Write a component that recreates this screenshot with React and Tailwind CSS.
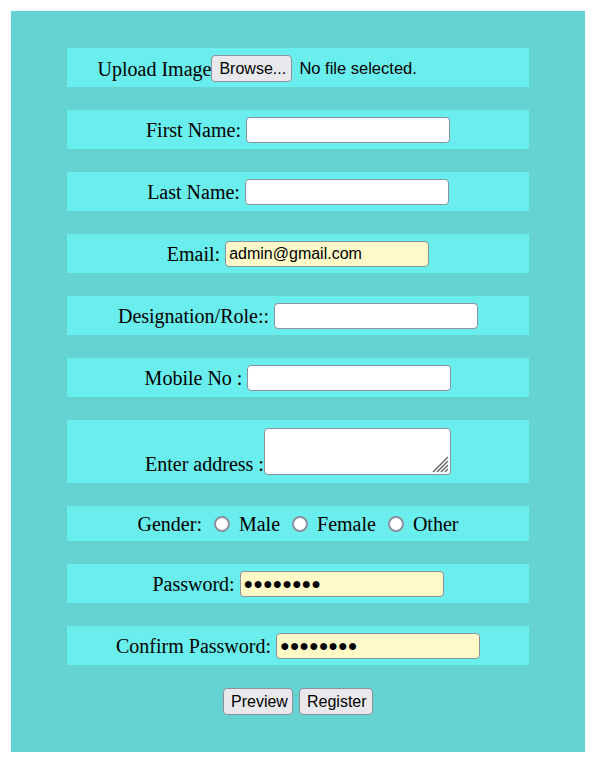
import React from "react";

const serif = { fontFamily: '"Liberation Serif", "Times New Roman", serif' };

function Row({ children, h = "h-[39px]", align = "items-center" }) {
  return (
    <div className={`w-[462px] mx-auto bg-[#6aeded] ${h} flex ${align} justify-center text-[20px] text-black`}>
      {children}
    </div>
  );
}

const inputCls =
  "w-[204px] h-[26px] border border-[#8f8f9d] rounded-[4px] px-[3px] text-[16px] text-black outline-none font-['Liberation_Sans',Arial,sans-serif]";

const btnCls =
  "h-[27px] border border-[#8f8f9d] rounded-[4px] bg-[#e9e9ed] text-[16px] text-black px-[7px] font-['Liberation_Sans',Arial,sans-serif] leading-none";

function TextField({ label, value = "", bg = "bg-white" }) {
  return (
    <div className="flex items-center">
      <span style={serif}>{label}</span>
      <input readOnly value={value} className={`${inputCls} ${bg} ml-[5px]`} />
    </div>
  );
}

function Radio({ label }) {
  return (
    <label className="flex items-center ml-[12px]">
      <input
        type="radio"
        name="gender"
        className="appearance-none w-[16px] h-[16px] rounded-full border-2 border-[#8f8f9d] bg-white m-0"
      />
      <span className="ml-[9px]" style={serif}>{label}</span>
    </label>
  );
}

export default function App() {
  return (
    <div className="w-[574px] ml-[11px] mt-[11px] bg-[#66d3d3] py-[37px] flex flex-col gap-[23px]">
      <Row>
        <div className="flex items-center mt-[2px]">
          <span style={serif}>Upload Image</span>
          <div className="w-[287px] flex items-center">
            <button className={`${btnCls} w-[81px]`}>Browse...</button>
            <span className="ml-[7px] text-[16.5px] font-['Liberation_Sans',Arial,sans-serif]">No file selected.</span>
          </div>
        </div>
      </Row>
      <Row>
        <TextField label="First Name:" />
      </Row>
      <Row>
        <TextField label="Last Name:" />
      </Row>
      <Row>
        <TextField label="Email:" value="admin@gmail.com" bg="bg-[#fffac8]" />
      </Row>
      <Row>
        <TextField label="Designation/Role::" />
      </Row>
      <Row>
        <TextField label="Mobile No :" />
      </Row>
      <Row h="h-[63px]" align="items-end">
        <div className="flex items-end mb-[8px]">
          <span style={serif} className="mb-[1px] leading-[20px]">Enter address :</span>
          <div className="relative">
            <textarea
              readOnly
              className="w-[187px] h-[47px] border border-[#8f8f9d] rounded-[4px] bg-white outline-none block resize-none"
            />
            <svg
              className="absolute right-[2px] bottom-[2px]"
              width="18"
              height="18"
              viewBox="0 0 18 18"
              stroke="#666666"
              strokeWidth="1.4"
            >
              <line x1="17" y1="2" x2="2" y2="17" />
              <line x1="17" y1="6" x2="6" y2="17" />
              <line x1="17" y1="10" x2="10" y2="17" />
              <line x1="17" y1="14" x2="14" y2="17" />
            </svg>
          </div>
        </div>
      </Row>
      <Row h="h-[35px]">
        <span style={serif}>Gender:</span>
        <Radio label="Male" />
        <Radio label="Female" />
        <Radio label="Other" />
      </Row>
      <Row>
        <div className="flex items-center">
          <span style={serif}>Password:</span>
          <input
            readOnly
            value={"●●●●●●●●"}
            className={`${inputCls} bg-[#fffac8] ml-[5px] font-['DejaVu_Sans',sans-serif] text-[13.5px]`}
          />
        </div>
      </Row>
      <Row>
        <div className="flex items-center">
          <span style={serif}>Confirm Password:</span>
          <input
            readOnly
            value={"●●●●●●●●"}
            className={`${inputCls} bg-[#fffac8] ml-[5px] font-['DejaVu_Sans',sans-serif] text-[13.5px]`}
          />
        </div>
      </Row>
      <div className="flex justify-center gap-[6px]">
        <button className={`${btnCls} w-[70px]`}>Preview</button>
        <button className={`${btnCls} w-[74px]`}>Register</button>
      </div>
    </div>
  );
}
